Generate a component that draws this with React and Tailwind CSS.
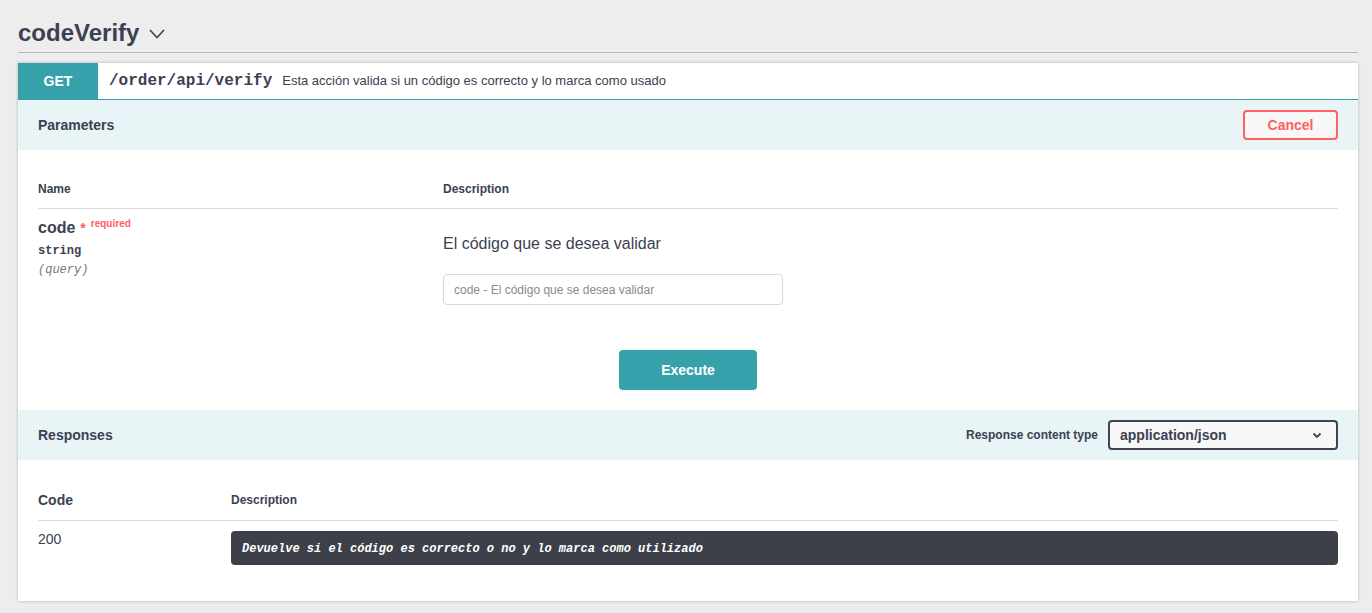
export default function App() {
  const sans = { fontFamily: '"Liberation Sans", Arial, sans-serif' };
  const mono = { fontFamily: '"Liberation Mono", "Courier New", monospace' };
  return (
    <div className="min-h-screen bg-[#ededed] pl-[18px] pr-[14px] text-[#3b4151]" style={sans}>
      <div className="flex items-center pt-[18px] pb-[4px] border-b border-[#b8b8b8]">
        <h2 className="text-[24px] leading-[30px] font-bold">codeVerify</h2>
        <svg className="ml-[10px] mt-[2px]" width="16" height="10" viewBox="0 0 16 10" fill="none">
          <polyline points="1,1 8,8.5 15,1" stroke="#3b4151" strokeWidth="1.6" />
        </svg>
      </div>

      <div className="mt-[10px] bg-white shadow-[0_0_3px_rgba(0,0,0,0.25)]">
        {/* summary */}
        <div className="flex h-[37px] items-center border-b border-[#36a1ab]">
          <div className="w-[80px] h-full bg-[#36a1ab] flex items-center justify-center text-white text-[14px] font-bold">GET</div>
          <span className="ml-[11px] text-[16px] font-bold" style={mono}>/order/api/verify</span>
          <span className="ml-[10px] text-[13px]">Esta acción valida si un código es correcto y lo marca como usado</span>
        </div>

        {/* parameters header */}
        <div className="h-[50px] bg-[#e8f4f6] px-[20px] flex items-center justify-between">
          <span className="text-[14px] font-bold">Parameters</span>
          <button className="w-[95px] h-[30px] border-2 border-[#ff6060] rounded-[4px] bg-[#f7f7f7] text-[#ff6060] text-[14px] font-bold">Cancel</button>
        </div>

        {/* parameters body */}
        <div className="px-[20px]">
          <div className="flex pt-[29px] pb-[9px] border-b border-[#dcdcdc] text-[12px] font-bold leading-[20px]">
            <div className="w-[405px]">Name</div>
            <div>Description</div>
          </div>
          <div className="flex pb-[10px]">
            <div className="w-[405px] pt-[9px]">
              <div className="flex items-start leading-[20px]">
                <span className="text-[16px] font-bold">code</span>
                <span className="ml-[5px] mt-[2px] text-[#ff6060] text-[14px] font-bold leading-[16px]">*</span>
                <span className="ml-[5px] text-[#ff6060] text-[10px] font-bold leading-[12px]">required</span>
              </div>
              <div className="text-[12px] font-bold leading-[18px] mt-[4px]" style={mono}>string</div>
              <div className="text-[12px] italic leading-[18px] mt-[1px] text-[#777]" style={mono}>(query)</div>
            </div>
            <div className="pt-[25px]">
              <p className="text-[16px] leading-[20px]">El código que se desea validar</p>
              <input
                className="mt-[20px] block w-[340px] h-[31px] border border-[#d9d9d9] rounded-[4px] px-[10px] pt-[1px] text-[12px] placeholder:text-[#8a8a8a] outline-none"
                placeholder="code - El código que se desea validar"
                style={sans}
              />
            </div>
          </div>
          <div className="flex justify-center pt-[35px] pb-[20px]">
            <button className="w-[138px] h-[40px] rounded-[4px] bg-[#36a1ab] text-white text-[14px] font-bold">Execute</button>
          </div>
        </div>

        {/* responses header */}
        <div className="h-[50px] bg-[#e8f4f6] px-[20px] flex items-center justify-between">
          <span className="text-[14px] font-bold">Responses</span>
          <div className="flex items-center">
            <span className="text-[12px] font-bold">Response content type</span>
            <div className="ml-[10px] w-[230px] h-[30px] border-2 border-[#41444e] rounded-[4px] bg-[#f7f7f7] flex items-center justify-between pl-[10px] pr-[14px]">
              <span className="text-[14px] font-bold">application/json</span>
              <svg width="10" height="7" viewBox="0 0 10 7" fill="none">
                <polyline points="1.5,1.5 5,5 8.5,1.5" stroke="#3b4151" strokeWidth="1.8" />
              </svg>
            </div>
          </div>
        </div>

        {/* responses body */}
        <div className="px-[20px] pb-[36px]">
          <div className="flex items-center pt-[30px] pb-[10px] border-b border-[#dcdcdc] leading-[20px]">
            <div className="w-[193px] text-[14px] font-bold">Code</div>
            <div className="text-[12px] font-bold">Description</div>
          </div>
          <div className="flex">
            <div className="w-[193px] pt-[8px] text-[14px] leading-[20px]">200</div>
            <div className="flex-1 mt-[10px] h-[34px] rounded-[4px] bg-[#3d4049] flex items-center px-[11px] pt-[1px]">
              <span className="text-white text-[12px] font-bold italic" style={mono}>
                Devuelve si el código es correcto o no y lo marca como utilizado
              </span>
            </div>
          </div>
        </div>
      </div>
    </div>
  );
}
